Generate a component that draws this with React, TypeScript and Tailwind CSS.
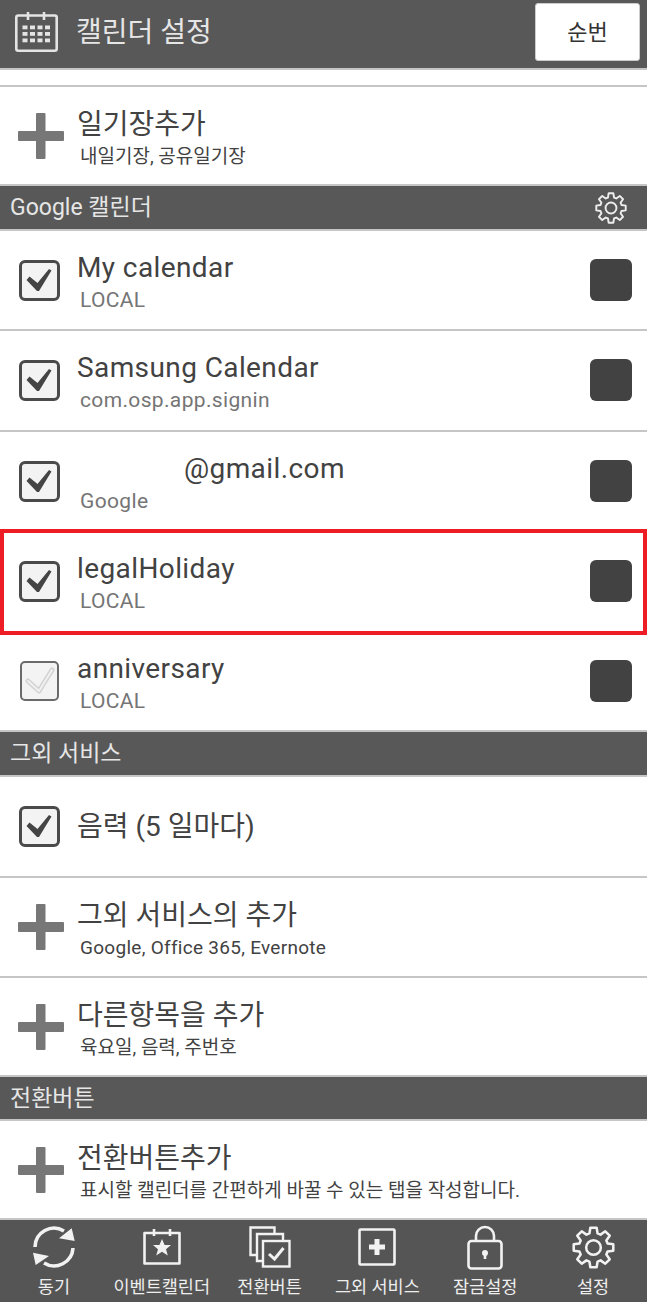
import React from "react";

const font = { fontFamily: '"Roboto","Noto Sans CJK KR",sans-serif' };

function gearPath(cx: number, cy: number, ro: number, ri: number, n: number) {
  const pts: string[] = [];
  for (let i = 0; i < n; i++) {
    const a = (i / n) * Math.PI * 2 - Math.PI / 2;
    const s = (Math.PI * 2) / n;
    const list: [number, number][] = [
      [ri, a - s * 0.36],
      [ro, a - s * 0.2],
      [ro, a + s * 0.2],
      [ri, a + s * 0.36],
    ];
    for (const [r, t] of list) pts.push(`${(cx + r * Math.cos(t)).toFixed(2)} ${(cy + r * Math.sin(t)).toFixed(2)}`);
  }
  return "M" + pts.join("L") + "Z";
}

function Gear({ className, sw }: { className: string; sw: number }) {
  return (
    <svg viewBox="0 0 44 44" className={className} fill="none" stroke="currentColor" strokeWidth={sw} strokeLinejoin="round">
      <path d={gearPath(22, 22, 20.5, 15, 8)} />
      <circle cx="22" cy="22" r="7.5" />
    </svg>
  );
}

function Plus() {
  return (
    <svg viewBox="0 0 46 46" className="w-[46px] h-[46px] shrink-0 ml-[18px]" fill="#777777">
      <rect x="18" y="0" width="9.5" height="46" rx="1" />
      <rect x="0" y="18" width="46" height="10" rx="1" />
    </svg>
  );
}

function Check({ faded }: { faded?: boolean }) {
  return (
    <div
      className={
        faded
          ? "ml-[20px] w-[39px] h-[40px] shrink-0 rounded-[5px] border-2 border-[#6a6a6a] bg-[#f3f3f3]"
          : "ml-[19px] w-[41px] h-[41px] shrink-0 rounded-[6px] border-[3px] border-[#4a4a4a] bg-[#f3f3f3]"
      }
    >
      {faded ? (
        <svg viewBox="0 0 35 36" className="w-[35px] h-[36px]" fill="none" strokeLinejoin="round" strokeLinecap="round">
          <path d="M6 18l11 10L30 7" stroke="#d2d2d2" strokeWidth="5" />
          <path d="M6 18l11 10L30 7" stroke="#f0f0f0" strokeWidth="2" />
        </svg>
      ) : (
        <svg viewBox="0 0 35 35" className="w-[35px] h-[35px]" fill="#444444">
          <path d="M4.5 17L7.5 13.5 15.5 20 27 6l2.5 1.5L17 28h-2z" />
        </svg>
      )}
    </div>
  );
}

function Row({ h, title, sub, titleClass, faded }: { h: string; title: string; sub: string; titleClass?: string; faded?: boolean }) {
  return (
    <div className={`${h} flex items-center bg-white`}>
      <Check faded={faded} />
      <div className={`${faded ? "ml-[18px]" : "ml-[17px]"} flex-1 min-w-0 pt-[4px]`}>
        <div className={`text-[28px] leading-[36px] tracking-[0.4px] text-[#424242] ${titleClass ?? ""}`}>{title}</div>
        <div className="ml-[3px] text-[21px] leading-[28px] tracking-[0.35px] text-[#757575]">{sub}</div>
      </div>
      <div className="w-[42px] h-[42px] rounded-[6px] bg-[#424242] mr-[15px]" />
    </div>
  );
}

function AddRow({ h, title, sub, subClass }: { h: string; title: string; sub: string; subClass?: string }) {
  return (
    <div className={`${h} flex items-center bg-white`}>
      <Plus />
      <div className="ml-[13px] flex-1 min-w-0 pt-[4px]">
        <div className="text-[28px] leading-[36px] text-[#424242]">{title}</div>
        <div className={`ml-[3px] mt-[2px] text-[19px] leading-[24px] text-[#424242] ${subClass ?? ""}`}>{sub}</div>
      </div>
    </div>
  );
}

function Line() {
  return <div className="h-[2px] bg-[#c6c6c6]" />;
}

function Section({ title, h, gear }: { title: string; h: string; gear?: boolean }) {
  return (
    <div className={`${h} bg-[#585858] flex items-center justify-between pl-[10px] pr-[20px]`}>
      <span className="text-[23px] text-[#e6e6e6] pt-[2px]">{title}</span>
      {gear && <Gear className="w-[32px] h-[32px] text-[#eeeeee]" sw={2.6} />}
    </div>
  );
}

function Tab({ label, children }: { label: string; children: React.ReactNode }) {
  return (
    <div className="flex flex-col items-center w-[108px]">
      <div className="h-[48px] flex items-center justify-center text-[#f2f2f2]">{children}</div>
      <div className="mt-[4px] text-[17.5px] leading-[24px] text-[#eeeeee] whitespace-nowrap">{label}</div>
    </div>
  );
}

export default function App() {
  return (
    <div className="w-[647px] h-[1302px] bg-white overflow-hidden flex flex-col" style={font}>
      <div className="h-[68px] bg-[#585858] flex items-center">
        <svg viewBox="0 0 43 40" className="ml-[15px] w-[43px] h-[40px] mt-[-4px] shrink-0" fill="none" stroke="#e4e4e4" strokeWidth="2.6">
          <rect x="1.3" y="3.5" width="40.4" height="35.2" rx="2" />
          <path d="M13 0v8M29 0v8" />
          <g fill="#e4e4e4" stroke="none">
            {[13.5, 20, 26.5].map((y) => [7.5, 15, 22.5, 30].map((x) => <rect key={x + "-" + y} x={x} y={y} width="5" height="3.8" />))}
          </g>
        </svg>
        <span className="ml-[18px] text-[28px] text-[#e6e6e6] mt-[-2px]">캘린더 설정</span>
        <div className="ml-auto mr-[7px] mt-[-4px] w-[105px] h-[58px] bg-white rounded-[3px] border border-[#cccccc] flex items-center justify-center text-[22px] text-[#333333]">순번</div>
      </div>
      <Line />
      <div className="h-[15px]" />
      <Line />
      <AddRow h="h-[97px]" title="일기장추가" sub="내일기장, 공유일기장" />
      <Line />
      <Section title="Google 캘린더" h="h-[43px]" gear />
      <Line />
      <Row h="h-[98px]" title="My calendar" sub="LOCAL" />
      <Line />
      <Row h="h-[99px] pb-[1px]" title="Samsung Calendar" sub="com.osp.app.signin" />
      <Line />
      <Row h="h-[98px]" title="@gmail.com" sub="Google" titleClass="pl-[107px]" />
      <div className="relative pt-[2px] pb-[2px]">
        <div className="absolute left-0 right-0 top-[-1px] h-[106px] border-[4px] border-[#ee1c25] z-10" />
        <Row h="h-[98px]" title="legalHoliday" sub="LOCAL" />
      </div>
      <Row h="h-[98px]" title="anniversary" sub="LOCAL" faded />
      <Line />
      <Section title="그외 서비스" h="h-[43px]" />
      <Line />
      <div className="h-[99px] flex items-center bg-white">
        <Check />
        <span className="ml-[17px] text-[28px] text-[#424242]">음력 (5 일마다)</span>
      </div>
      <Line />
      <AddRow h="h-[98px]" title="그외 서비스의 추가" sub="Google, Office 365, Evernote" subClass="tracking-[0.28px]" />
      <Line />
      <AddRow h="h-[97px]" title="다른항목을 추가" sub="육요일, 음력, 주번호" />
      <Line />
      <Section title="전환버튼" h="h-[42px]" />
      <Line />
      <AddRow h="h-[97px]" title="전환버튼추가" sub="표시할 캘린더를 간편하게 바꿀 수 있는 탭을 작성합니다." />
      <Line />
      <div className="flex-1 bg-[#555555] flex pt-[3px]">
        <Tab label="동기">
          <svg viewBox="0 0 42 42" className="w-[42px] h-[42px]" fill="none" stroke="currentColor" strokeWidth="3.6">
            <path d="M2 21A19 19 0 0 1 31 5" />
            <path d="M40 22A19 19 0 0 1 11 37" />
            <path d="M41.7 15L26 12.3 38.7 2.3zM0 26.7L16 30 2.7 39z" fill="currentColor" stroke="none" />
          </svg>
        </Tab>
        <Tab label="이벤트캘린더">
          <svg viewBox="0 0 38 36" className="w-[38px] h-[36px]" fill="none" stroke="currentColor" strokeWidth="2.6">
            <path d="M1.5 4h35v30.5h-35z" strokeLinejoin="round" />
            <path d="M11 0v7M27 0v7" />
            <path d="M19 10l2.6 6h6.4l-5 4.2 1.8 6.3-5.8-3.7-5.8 3.7 1.8-6.3-5-4.2h6.4z" fill="currentColor" stroke="none" />
          </svg>
        </Tab>
        <Tab label="전환버튼">
          <svg viewBox="0 0 42 42" className="w-[42px] h-[42px]" fill="none" stroke="currentColor" strokeWidth="2.4">
            <path d="M8 29H1.5V1.5h24V7" />
            <path d="M14 35H8V8h26v7" />
            <rect x="14" y="15" width="26.5" height="25.5" />
            <path d="M20 28l5.5 5 9-11" strokeWidth="3" />
          </svg>
        </Tab>
        <Tab label="그외 서비스">
          <svg viewBox="0 0 38 38" className="w-[38px] h-[38px]" fill="none" stroke="currentColor" strokeWidth="2.6">
            <rect x="1.5" y="1.5" width="35" height="35" rx="1" />
            <path d="M19 11v16M11 19h16" strokeWidth="5" />
          </svg>
        </Tab>
        <Tab label="잠금설정">
          <svg viewBox="0 0 36 45" className="w-[36px] h-[45px]" fill="none" stroke="currentColor" strokeWidth="2.6">
            <rect x="1.5" y="16" width="33" height="27.5" rx="3" />
            <path d="M9 16v-5a9 9 0 0 1 18 0v5" />
            <circle cx="18" cy="28" r="3" fill="currentColor" stroke="none" />
            <path d="M18 28v6" />
          </svg>
        </Tab>
        <Tab label="설정">
          <Gear className="w-[43px] h-[43px]" sw={2.6} />
        </Tab>
      </div>
    </div>
  );
}
